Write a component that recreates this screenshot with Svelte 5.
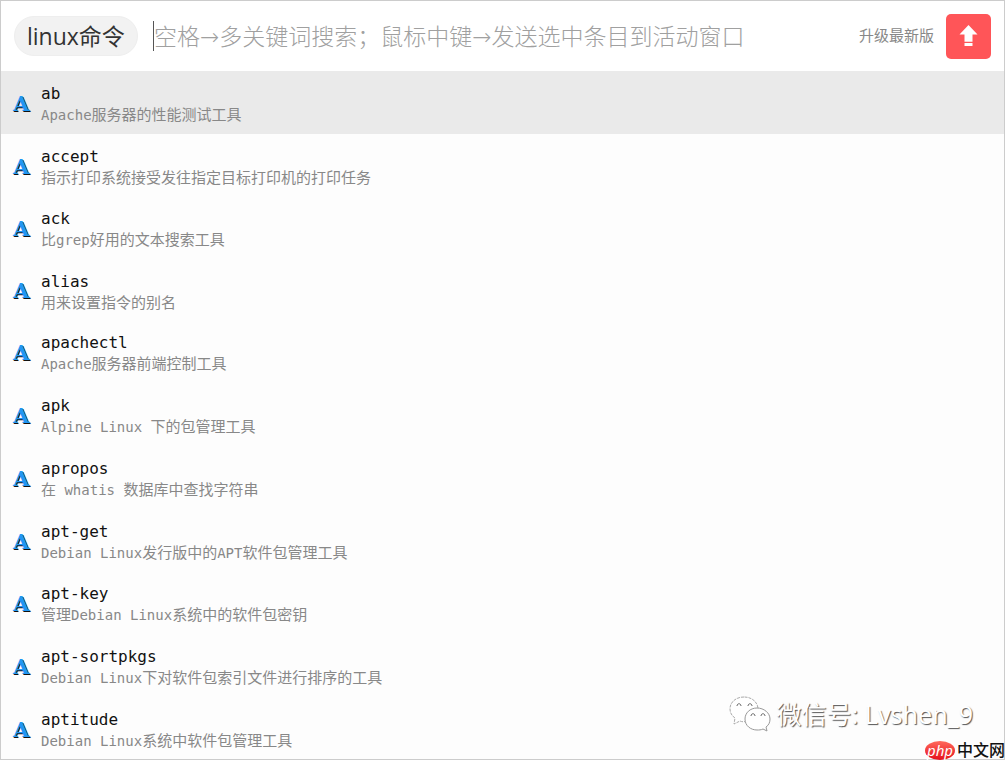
<div class="window">
    <header class="search-bar">
        <button type="button" class="tag">linux命令</button>
        <input
            type="text"
            class="search"
            aria-label="搜索"
            placeholder="空格→多关键词搜索；鼠标中键→发送选中条目到活动窗口"
            bind:value={query}
        />
        <a class="upgrade-link" href="#upgrade">升级最新版</a>
        <button type="button" class="upgrade" aria-label="升级最新版">
            <svg width="19" height="22" viewBox="0 0 19 22" fill="#fff">
                <path d="M9.500 0 L18.500 9.500 H13.500 V16 H5.500 V9.500 H0.500 Z" />
                <path d="M5.500 16 H13.500 V17 H5.500 Z" opacity="0.75" />
                <path d="M5.500 18 H13.500 V21 H5.500 Z" />
            </svg>
        </button>
    </header>

    <ul class="results">
        {#each filtered as command, i (command.name)}
            <li>
                <button type="button" class="row" class:selected={i === selected} on:click={() => (selected = i)}>
                    <span class="icon" aria-hidden="true">A</span>
                    <span class="text">
                        <span class="name">{command.name}</span>
                        <span class="description">
                            {#each splitLatin(command.description) as part}<span class:latin={isLatin(part)}>{part}</span>{/each}
                        </span>
                    </span>
                </button>
            </li>
        {/each}
    </ul>

    <div class="wechat">
        <svg width="42" height="36" viewBox="0 0 42 36" fill="#fff" stroke="#999" stroke-width="1">
            <path d="M15 1 C7 1 1 6 1 13 C1 17 3 20 6 22 L5 28 L11 25 C13 26 16 26 18 25 L29 12 C28 5 22 1 15 1 Z" stroke="#aaa" stroke-dasharray="3 1" />
            <path d="M28 12 C21 12 16 17 16 23 C16 30 22 34 28 34 C30 34 32 34 34 33 L38 35 L37 31 C40 29 41 26 41 23 C41 17 35 12 28 12 Z" />
            <path d="M8 10 C8 7 12 7 12 10 M19 10 C19 7 23 7 23 10 M22 20 C22 17 26 17 26 20 M32 20 C32 17 36 17 36 20" fill="none" stroke="#666" />
        </svg>
        <span>微信号: Lvshen_9</span>
    </div>

    <div class="site-badge">
        <span class="php">php</span>
        <span class="site-name">中文网</span>
    </div>
</div>

<script>
    const commands = [
        { name: 'ab', description: 'Apache服务器的性能测试工具' },
        { name: 'accept', description: '指示打印系统接受发往指定目标打印机的打印任务' },
        { name: 'ack', description: '比grep好用的文本搜索工具' },
        { name: 'alias', description: '用来设置指令的别名' },
        { name: 'apachectl', description: 'Apache服务器前端控制工具' },
        { name: 'apk', description: 'Alpine Linux 下的包管理工具' },
        { name: 'apropos', description: '在 whatis 数据库中查找字符串' },
        { name: 'apt-get', description: 'Debian Linux发行版中的APT软件包管理工具' },
        { name: 'apt-key', description: '管理Debian Linux系统中的软件包密钥' },
        { name: 'apt-sortpkgs', description: 'Debian Linux下对软件包索引文件进行排序的工具' },
        { name: 'aptitude', description: 'Debian Linux系统中软件包管理工具' }
    ];

    let query = '';
    let selected = 0;

    $: keywords = query.toLowerCase().split(' ').filter(Boolean);
    $: filtered = commands.filter((command) =>
        keywords.every((word) => (command.name + command.description).toLowerCase().includes(word))
    );

    // Latin runs are set in a smaller monospace than the Chinese text
    function splitLatin(text) {
        return text.match(/[\x20-\x7e]+|[^\x20-\x7e]+/g) || [];
    }

    function isLatin(part) {
        return /^[\x20-\x7e]/.test(part);
    }
</script>

<style>
    :global(body) {
        margin: 0;
    }

    .window {
        position: relative;
        display: flex;
        flex-direction: column;
        min-height: 100vh;
        box-sizing: border-box;
        border: 1px solid #ccc;
        background: #fdfdfd;
        font-family: "Noto Sans", "Noto Sans CJK SC", sans-serif;
    }

    button {
        border: none;
        padding: 0;
        font-family: inherit;
        cursor: pointer;
    }

    .search-bar {
        display: flex;
        align-items: center;
        height: 70px;
        padding: 0 13px;
        background: #fff;
    }

    .tag {
        height: 40px;
        padding: 0 12px;
        border: 1px solid #eee;
        border-radius: 20px;
        background: #f2f2f2;
        color: #333;
        font-family: "Open Sans", "Noto Sans CJK SC", sans-serif;
        font-size: 23px;
        line-height: 38px;
        white-space: nowrap;
    }

    .search {
        flex: 1;
        min-width: 0;
        height: 30px;
        box-sizing: border-box;
        margin: 0 12px 0 15px;
        padding: 2px 0 0;
        border: none;
        border-left: 1px solid #555;
        outline: none;
        background: transparent;
        color: #333;
        font-family: "DejaVu Sans", "Noto Sans CJK SC", sans-serif;
        font-size: 23px;
        font-weight: 300;
    }

    .search::placeholder {
        color: #a0a0a0;
        opacity: 1;
    }

    .upgrade-link {
        margin-right: 12px;
        padding-bottom: 4px;
        color: #888;
        font-size: 15px;
        text-decoration: none;
        white-space: nowrap;
    }

    .upgrade {
        display: flex;
        align-items: center;
        justify-content: center;
        width: 45px;
        height: 45px;
        border-radius: 5px;
        background: #ff5558;
    }

    .results {
        flex: 1;
        display: flex;
        flex-direction: column;
        margin: 0;
        padding: 0;
        list-style: none;
    }

    .results li {
        flex: 1;
        display: flex;
        max-height: 64px;
    }

    .row {
        flex: 1;
        display: flex;
        align-items: center;
        padding: 4px 12px 0;
        background: transparent;
        text-align: left;
    }

    .row.selected {
        background: #eaeaea;
    }

    .icon {
        width: 28px;
        color: #2196f3;
        font-family: "DejaVu Serif", serif;
        font-size: 21px;
        font-weight: 700;
        line-height: 20px;
        text-shadow: 1px 1px 0 #111;
    }

    .text {
        display: flex;
        flex-direction: column;
    }

    .name {
        color: #111;
        font-family: "DejaVu Sans Mono", monospace;
        font-size: 16px;
        line-height: 21px;
    }

    .description {
        color: #888;
        font-family: "Noto Sans CJK SC", sans-serif;
        font-size: 15px;
        line-height: 20px;
    }

    .latin {
        font-family: "DejaVu Sans Mono", monospace;
        font-size: 14px;
        white-space: pre;
    }

    .wechat {
        position: absolute;
        right: 31px;
        bottom: 25px;
        display: flex;
        align-items: center;
        gap: 6px;
        color: #fff;
        font-size: 25px;
        line-height: 40px;
        text-shadow: 1px 1px 1px #555;
        pointer-events: none;
    }

    .site-badge {
        position: absolute;
        right: -1px;
        bottom: -1px;
        display: flex;
        align-items: center;
        gap: 2px;
        color: #111;
        line-height: 19px;
    }

    .php {
        width: 30px;
        border-radius: 50%;
        background: linear-gradient(#ff6a5c, #e60f1c);
        color: #fff;
        font-size: 15px;
        font-style: italic;
        line-height: 19px;
        text-align: center;
    }

    .site-name {
        font-size: 16px;
        font-weight: 500;
    }
</style>
